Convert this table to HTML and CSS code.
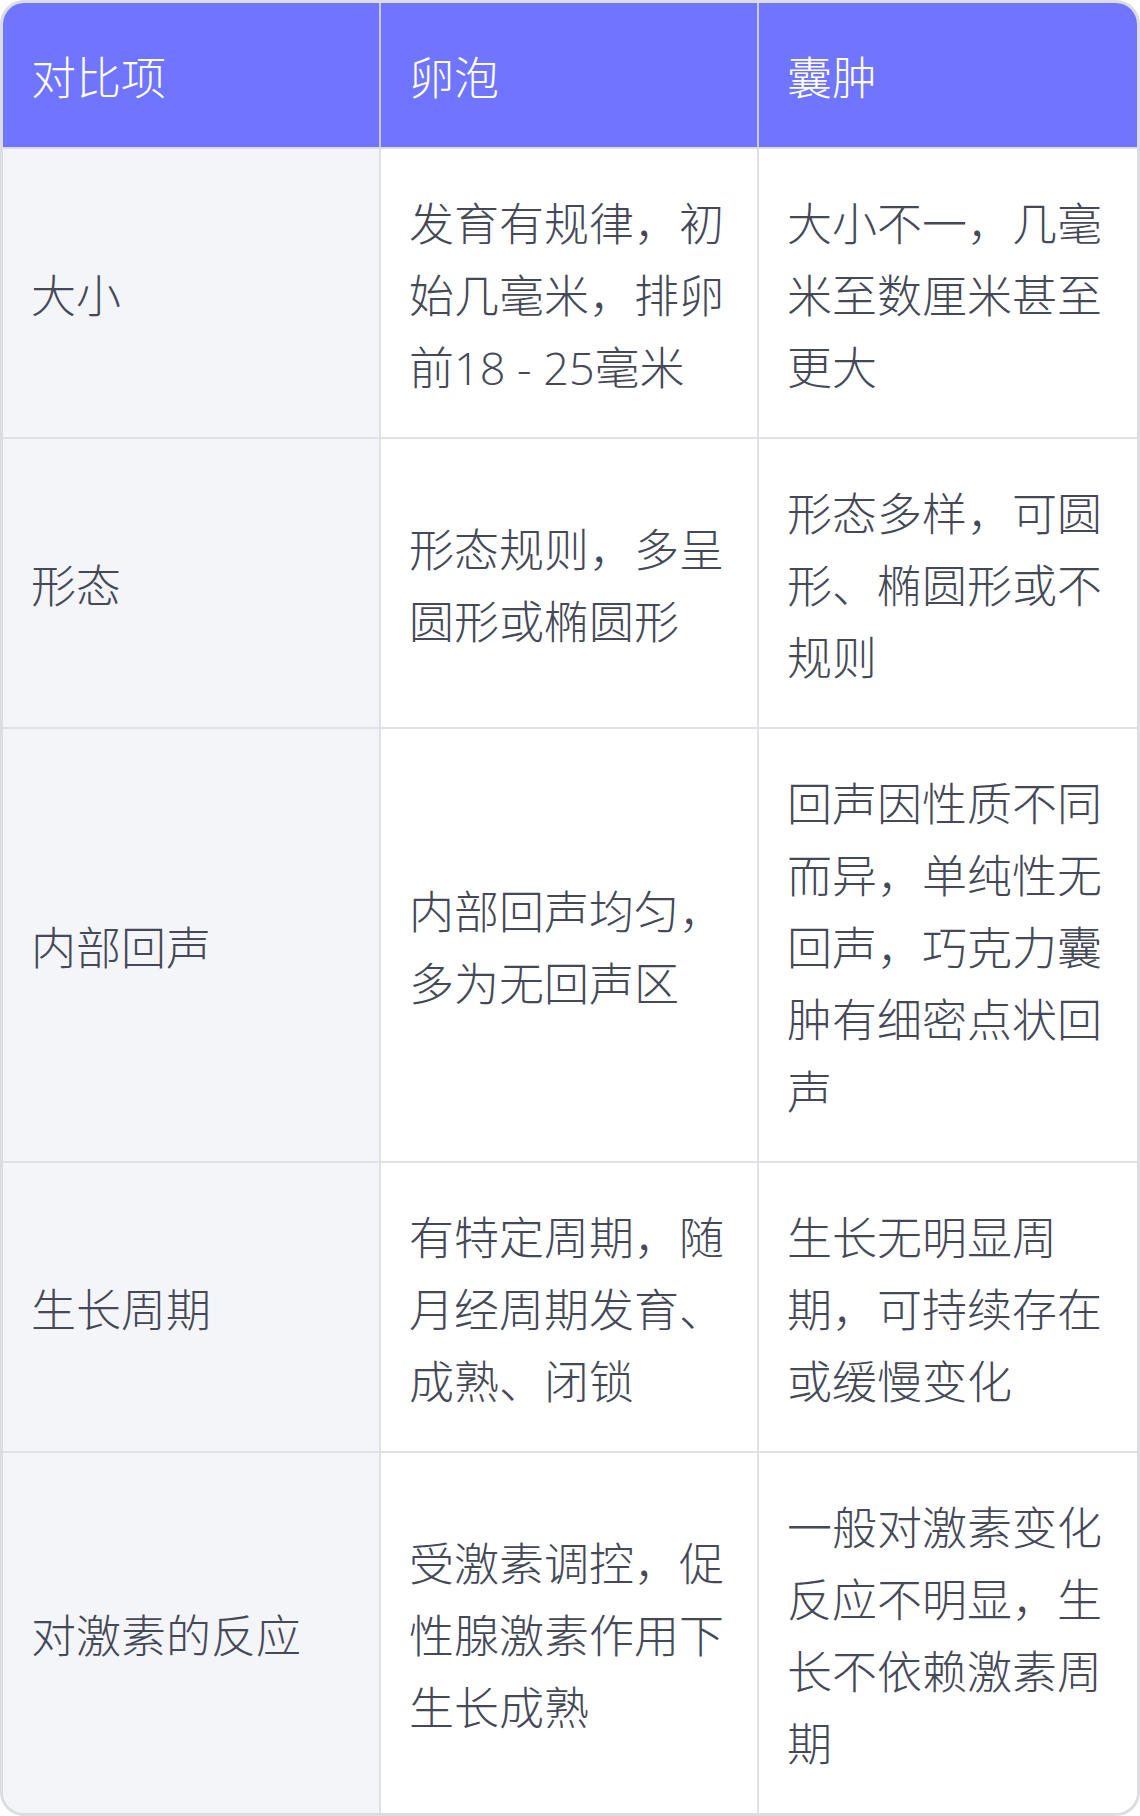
FILE: index.html
```html
<!DOCTYPE html>
<html lang="zh-CN">
<head>
<meta charset="utf-8">
<title>卵泡与囊肿对比</title>
<link rel="stylesheet" href="styles.css">
</head>
<body>
<table class="compare">
  <thead>
    <tr>
      <th>对比项</th>
      <th>卵泡</th>
      <th>囊肿</th>
    </tr>
  </thead>
  <tbody>
    <tr>
      <td class="label">大小</td>
      <td>发育有规律，初始几毫米，排卵前18 - 25毫米</td>
      <td>大小不一，几毫米至数厘米甚至更大</td>
    </tr>
    <tr>
      <td class="label">形态</td>
      <td>形态规则，多呈圆形或椭圆形</td>
      <td>形态多样，可圆形、椭圆形或不规则</td>
    </tr>
    <tr>
      <td class="label">内部回声</td>
      <td>内部回声均匀，多为无回声区</td>
      <td>回声因性质不同而异，单纯性无回声，巧克力囊肿有细密点状回声</td>
    </tr>
    <tr>
      <td class="label">生长周期</td>
      <td>有特定周期，随月经周期发育、成熟、闭锁</td>
      <td>生长无明显周期，可持续存在或缓慢变化</td>
    </tr>
    <tr>
      <td class="label">对激素的反应</td>
      <td>受激素调控，促性腺激素作用下生长成熟</td>
      <td>一般对激素变化反应不明显，生长不依赖激素周期</td>
    </tr>
  </tbody>
</table>
</body>
</html>
```

FILE: styles.css
```css
html, body {
  margin: 0;
  padding: 0;
  background: #ffffff;
}

.compare {
  width: 1140px;
  table-layout: fixed;
  border-collapse: separate;
  border-spacing: 0;
  border: 3px solid #dcdde2;
  border-radius: 24px;
  overflow: hidden;
  font-family: "Open Sans", "Noto Sans CJK SC Light", "Noto Sans CJK SC DemiLight", "Noto Sans CJK SC", sans-serif;
  font-weight: 300;
  font-size: 45px;
  line-height: 72px;
  color: #454957;
}

.compare th,
.compare td {
  padding: 39px 26px 33px 28px;
  text-align: left;
  vertical-align: middle;
  border-right: 2px solid #e0e1e6;
  border-bottom: 2px solid #e0e1e6;
  word-break: break-all;
}

.compare th:last-child,
.compare td:last-child {
  border-right: none;
}

.compare tbody tr:last-child td {
  border-bottom: none;
}

.compare th {
  background: #7075ff;
  color: #ffffff;
  font-weight: 300;
  border-right-color: #c9cbea;
  border-bottom-color: #dcdde4;
}

.compare td {
  background: #ffffff;
}

.compare td.label {
  background: #f4f5f9;
}
```
